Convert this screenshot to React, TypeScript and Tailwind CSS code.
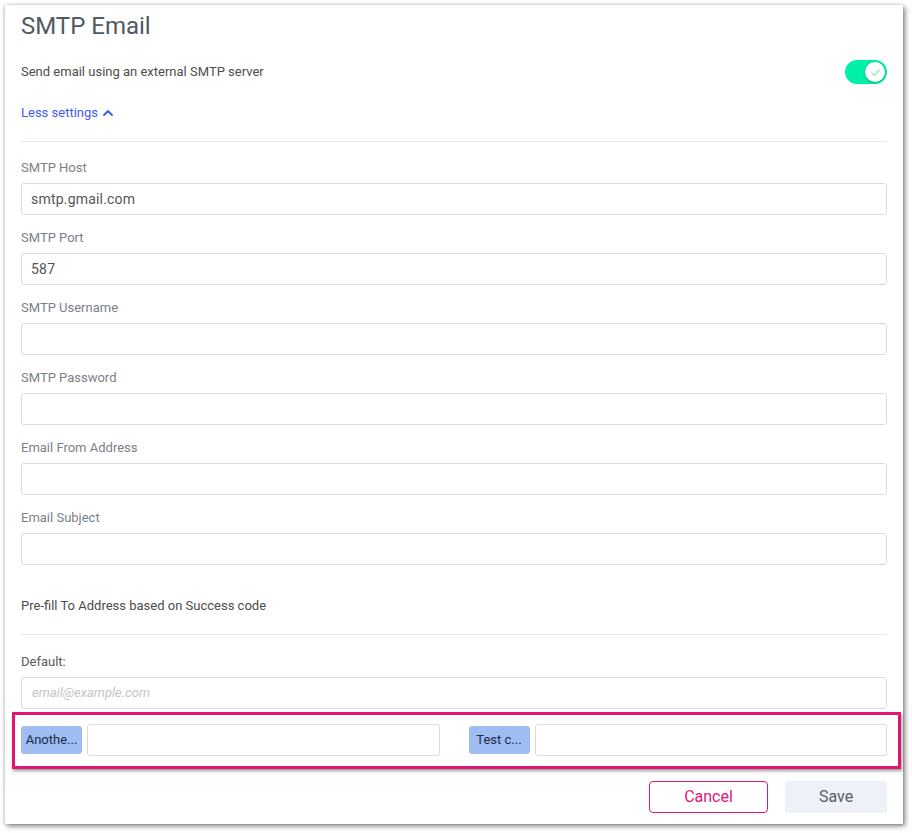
import React from "react";

const fields = [
  { label: "SMTP Host", value: "smtp.gmail.com" },
  { label: "SMTP Port", value: "587" },
  { label: "SMTP Username", value: "" },
  { label: "SMTP Password", value: "" },
  { label: "Email From Address", value: "" },
  { label: "Email Subject", value: "" },
];

const Field = ({ label, value }: { label: string; value: string }) => (
  <div className="flex flex-col">
    <label className="text-[13px] leading-5 text-[#7b7f8a]">{label}</label>
    <div className="mt-[5px] h-[32px] rounded-[3px] border border-[#dcdcdc] px-[9px] flex items-center text-[14px] tracking-[0.2px] text-[#555555]">
      {value}
    </div>
  </div>
);

const CodeRow = ({ chip }: { chip: string }) => (
  <div className="flex flex-1 items-center gap-[5px]">
    <span className="w-[61px] h-[28px] shrink-0 rounded-[3px] bg-[#9dbdf3] text-[13px] text-[#1f2a44] flex items-center justify-center">
      {chip}
    </span>
    <div className="flex-1 h-[32px] rounded-[3px] border border-[#dcdcdc]" />
  </div>
);

export default function App() {
  return (
    <div className="w-[912px] h-[833px] bg-white pl-[5px] pt-[5px] font-['Roboto',sans-serif]">
      <div className="w-[898px] h-[819px] bg-white shadow-[2px_2px_5px_rgba(0,0,0,0.5),-1px_0_3px_rgba(0,0,0,0.15)] px-[16px] pt-[5px] flex flex-col">
        <h1 className="text-[24px] leading-8 text-[#4f5a65] font-normal">SMTP Email</h1>

        <div className="mt-[18px] flex items-center justify-between">
          <span className="text-[13px] text-[#4d4d4d]">Send email using an external SMTP server</span>
          <span className="relative w-[42px] h-[24px] rounded-full bg-[#00f0a8]">
            <span className="absolute right-[2px] top-[2px] w-[20px] h-[20px] rounded-full bg-white shadow-[0_1px_3px_rgba(0,0,0,0.25)] flex items-center justify-center">
              <svg width="11" height="11" viewBox="0 0 12 12" fill="none">
                <path d="M2 6.5l2.6 2.5L10 3.5" stroke="#9be8c8" strokeWidth="1.6" strokeLinecap="round" strokeLinejoin="round" />
              </svg>
            </span>
          </span>
        </div>

        <div className="mt-[19px] flex items-center gap-[4px] text-[13px] leading-5 text-[#3f5cf2]">
          Less settings
          <svg width="12" height="12" viewBox="0 0 12 12" fill="none">
            <path d="M2 8l4-4 4 4" stroke="#3f5cf2" strokeWidth="1.8" strokeLinecap="round" strokeLinejoin="round" />
          </svg>
        </div>

        <div className="mt-[18px] h-px bg-[#e8e8e8]" />

        <div className="mt-[16px] flex flex-col gap-[13px]">
          {fields.map((f) => (
            <Field key={f.label} label={f.label} value={f.value} />
          ))}
        </div>

        <div className="mt-[31px] text-[13px] leading-5 text-[#4d4d4d]">Pre-fill To Address based on Success code</div>

        <div className="mt-[18px] h-px bg-[#e8e8e8]" />

        <div className="mt-[17px] text-[13px] leading-5 text-[#5a5a5a]">Default:</div>
        <div className="mt-[5px] h-[32px] rounded-[3px] border border-[#dcdcdc] px-[10px] flex items-center text-[13px] italic text-[#c4c4c4]">
          email@example.com
        </div>

        <div className="relative mt-[15px] flex items-center gap-[29px]">
          <CodeRow chip="Anothe..." />
          <CodeRow chip="Test c..." />
          <div className="pointer-events-none absolute -left-[9px] -right-[14px] -top-[12px] -bottom-[13px] border-[3px] border-[#e0157a] shadow-[1px_2px_3px_rgba(0,0,0,0.4)]" />
        </div>

        <div className="mt-[25px] flex justify-end gap-[17px]">
          <button className="w-[119px] h-[32px] rounded-[4px] border border-[#e0157a] text-[16px] text-[#e0157a] bg-white">Cancel</button>
          <button className="w-[102px] h-[32px] rounded-[3px] bg-[#eef1f8] text-[16px] text-[#5a606c]">Save</button>
        </div>
      </div>
    </div>
  );
}
